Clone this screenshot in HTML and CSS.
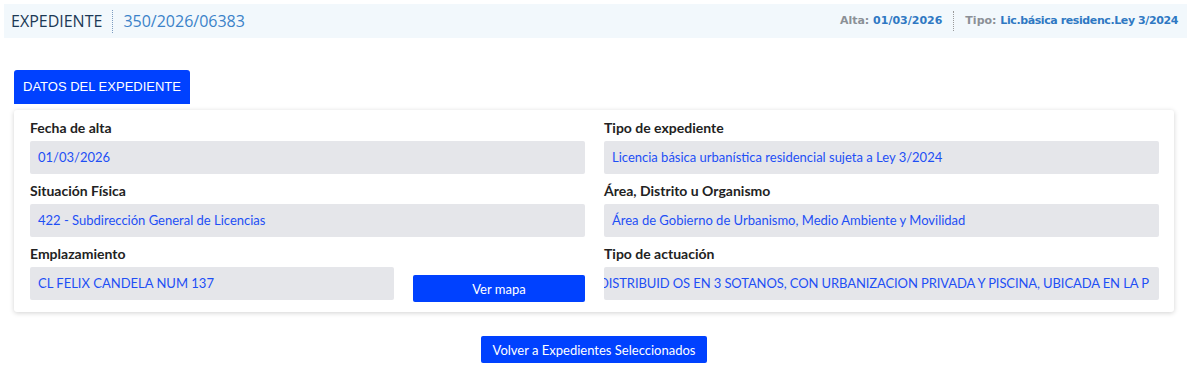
FILE: index.html
```html
<!DOCTYPE html>
<html lang="es">
<head>
    <meta charset="UTF-8">
    <meta name="viewport" content="width=device-width, initial-scale=1.0">
    <title>Expediente 350/2026/06383</title>
    <link rel="stylesheet" href="styles.css">
</head>
<body>
    <div class="cabecera">
        <div class="cab-titulo">
            <span class="cab-label">EXPEDIENTE</span>
            <span class="cab-numero">350/2026/06383</span>
        </div>
        <div class="cab-datos">
            <span class="cab-dato">Alta: <b>01/03/2026</b></span>
            <span class="cab-dato">Tipo: <b>Lic.básica residenc.Ley 3/2024</b></span>
        </div>
    </div>

    <div class="contenido">
        <div class="pestana">DATOS DEL EXPEDIENTE</div>
        <div class="tarjeta">
            <div class="rejilla">
                <div class="campo">
                    <label>Fecha de alta</label>
                    <div class="valor">01/03/2026</div>
                </div>
                <div class="campo">
                    <label>Tipo de expediente</label>
                    <div class="valor">Licencia básica urbanística residencial sujeta a Ley 3/2024</div>
                </div>
                <div class="campo">
                    <label>Situación Física</label>
                    <div class="valor">422 - Subdirección General de Licencias</div>
                </div>
                <div class="campo">
                    <label>Área, Distrito u Organismo</label>
                    <div class="valor">Área de Gobierno de Urbanismo, Medio Ambiente y Movilidad</div>
                </div>
                <div class="campo">
                    <label>Emplazamiento</label>
                    <div class="fila-mapa">
                        <div class="valor">CL FELIX CANDELA NUM 137</div>
                        <button class="boton boton-mapa">Ver mapa</button>
                    </div>
                </div>
                <div class="campo">
                    <label>Tipo de actuación</label>
                    <!-- campo con el texto desplazado, como un input con scroll -->
                    <div class="valor desplazado">DISTRIBUID OS EN 3 SOTANOS, CON URBANIZACION PRIVADA Y PISCINA, UBICADA EN LA P</div>
                </div>
            </div>
        </div>

        <div class="acciones">
            <button class="boton boton-volver">Volver a Expedientes Seleccionados</button>
        </div>
    </div>
</body>
</html>
```

FILE: styles.css
```css
body {
    margin: 0;
    padding: 4px 13px 0 4px;
    font-family: Lato, "Open Sans", sans-serif;
    background-color: #fff;
}

/* Cabecera */
.cabecera {
    display: flex;
    justify-content: space-between;
    align-items: center;
    height: 34px;
    background-color: #f2f8fc;
    padding: 0 9px 0 7px;
}
.cab-titulo {
    display: flex;
    align-items: center;
}
.cab-label {
    font-family: "Open Sans", sans-serif;
    font-size: 16px;
    color: #1c3956;
    padding-right: 10px;
    border-right: 1px dotted #7d9cc0;
    line-height: 23px;
}
.cab-numero {
    font-family: "Open Sans", sans-serif;
    font-size: 16px;
    color: #3b82c9;
    padding-left: 10px;
}
.cab-datos {
    display: flex;
    align-items: center;
    font-family: "DejaVu Sans", Verdana, sans-serif;
    font-size: 11px;
    font-weight: bold;
    color: #8b9096;
}
.cab-dato {
    line-height: 20px;
}
.cab-dato b {
    color: #2f78c3;
}
.cab-dato + .cab-dato {
    margin-left: 11px;
    padding-left: 11px;
    border-left: 1px dotted #9a9a9a;
}
.cab-dato + .cab-dato b {
    letter-spacing: -0.4px;
}

/* Contenido */
.contenido {
    padding: 32px 13px 0 10px;
}
.pestana {
    display: inline-block;
    background-color: #0041ff;
    color: #fff;
    font-family: "Liberation Sans", Arial, sans-serif;
    font-size: 13px;
    line-height: 34px;
    padding: 0 9px;
    border-radius: 3px 3px 0 0;
}
.tarjeta {
    margin-top: 6px;
    background-color: #fff;
    box-shadow: 0 1px 5px rgba(0, 0, 0, 0.18);
    border-radius: 3px;
    padding: 8px 15px 12px 16px;
}
.rejilla {
    display: grid;
    grid-template-columns: minmax(0, 1fr) minmax(0, 1fr);
    column-gap: 19px;
    row-gap: 7px;
}
.campo label {
    display: block;
    font-size: 14px;
    font-weight: bold;
    color: #222;
    line-height: 20px;
    margin-bottom: 3px;
}
.valor {
    background-color: #e5e6ea;
    color: #1e4ff5;
    font-size: 13px;
    height: 33px;
    line-height: 33px;
    padding: 0 8px;
    border-radius: 2px;
    white-space: nowrap;
    overflow: hidden;
}
.desplazado {
    padding-left: 0;
    text-indent: -5px;
    letter-spacing: -0.1px;
}
.fila-mapa {
    display: flex;
    align-items: flex-end;
    gap: 19px;
}
.fila-mapa .valor {
    flex: 0 0 364px;
    box-sizing: border-box;
}
.boton {
    background-color: #0041ff;
    color: #fff;
    border: none;
    border-radius: 2px;
    font-family: Lato, sans-serif;
    font-size: 13px;
    white-space: nowrap;
    cursor: pointer;
}
.boton-mapa {
    flex: 1;
    height: 27px;
    margin-bottom: -2px;
}
.acciones {
    display: flex;
    justify-content: center;
    padding-top: 24px;
}
.boton-volver {
    height: 27px;
    padding: 0 12px;
}
```
